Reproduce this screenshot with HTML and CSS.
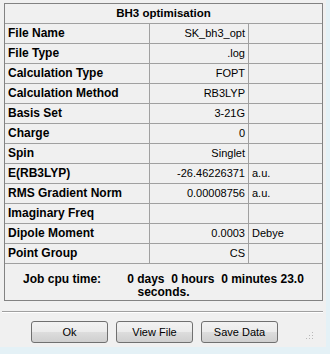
FILE: index.html
```html
<!DOCTYPE html>
<html lang="en">
<head>
  <meta charset="UTF-8" />
  <title>BH3 optimisation</title>
  <link rel="stylesheet" href="styles.css">
</head>
<body>
  <!-- 结果对话框 -->
  <div class="dialog">
    <div class="panel">
      <div class="title">BH3 optimisation</div>
      <div class="row"><div class="label">File Name</div><div class="value">SK_bh3_opt</div><div class="unit"></div></div>
      <div class="row"><div class="label">File Type</div><div class="value">.log</div><div class="unit"></div></div>
      <div class="row"><div class="label">Calculation Type</div><div class="value">FOPT</div><div class="unit"></div></div>
      <div class="row"><div class="label">Calculation Method</div><div class="value">RB3LYP</div><div class="unit"></div></div>
      <div class="row"><div class="label">Basis Set</div><div class="value">3-21G</div><div class="unit"></div></div>
      <div class="row"><div class="label">Charge</div><div class="value">0</div><div class="unit"></div></div>
      <div class="row"><div class="label">Spin</div><div class="value">Singlet</div><div class="unit"></div></div>
      <div class="row"><div class="label">E(RB3LYP)</div><div class="value">-26.46226371</div><div class="unit">a.u.</div></div>
      <div class="row"><div class="label">RMS Gradient Norm</div><div class="value">0.00008756</div><div class="unit">a.u.</div></div>
      <div class="row"><div class="label">Imaginary Freq</div><div class="value"></div><div class="unit"></div></div>
      <div class="row"><div class="label">Dipole Moment</div><div class="value">0.0003</div><div class="unit">Debye</div></div>
      <div class="row"><div class="label">Point Group</div><div class="value">CS</div><div class="unit"></div></div>
      <div class="job">
        <div class="job-line"><span class="job-label">Job cpu time:</span><span class="job-value">0 days  0 hours  0 minutes 23.0</span></div>
        <div class="job-line">seconds.</div>
      </div>
    </div>

    <div class="separator"></div>

    <!-- 按钮 -->
    <div class="buttons">
      <button class="btn">Ok</button>
      <button class="btn">View File</button>
      <button class="btn">Save Data</button>
    </div>

    <svg class="grip" width="9" height="9" viewBox="0 0 9 9">
      <rect x="7" y="1" width="1" height="1" fill="#b8b8b8"/>
      <rect x="4" y="4" width="1" height="1" fill="#b8b8b8"/>
      <rect x="7" y="4" width="1" height="1" fill="#b8b8b8"/>
      <rect x="1" y="7" width="1" height="1" fill="#b8b8b8"/>
      <rect x="4" y="7" width="1" height="1" fill="#b8b8b8"/>
      <rect x="7" y="7" width="1" height="1" fill="#b8b8b8"/>
    </svg>
  </div>
</body>
</html>
```

FILE: styles.css
```css
* {
  box-sizing: border-box;
}

body {
  margin: 0;
  background: #e4f1f6;
  font-family: "Liberation Sans", Arial, sans-serif;
  color: #000;
}

/* 对话框 */
.dialog {
  position: relative;
  width: 326px;
  height: 347px;
  padding: 3px 0 0 4px;
  background: #f0f0f0;
}

.panel {
  width: 319px;
  border: 1px solid #828282;
}

.title {
  height: 20px;
  border-bottom: 1px solid #a0a0a0;
  text-align: center;
  font-weight: bold;
  font-size: 11.5px;
  line-height: 19px;
}

/* 表格行 */
.row {
  display: grid;
  grid-template-columns: 145px 99px 73px;
  height: 20px;
  border-bottom: 1px solid #a0a0a0;
  line-height: 19px;
}

.label,
.value {
  border-right: 1px solid #a0a0a0;
}

.label {
  padding-left: 3px;
  font-weight: bold;
  font-size: 12px;
  white-space: nowrap;
}

.value {
  padding-right: 3px;
  text-align: right;
  font-size: 11px;
}

.unit {
  padding-left: 3px;
  font-size: 11px;
}

/* 计算时间 */
.job {
  height: 36px;
  padding-top: 9px;
  text-align: center;
  font-weight: bold;
  font-size: 12px;
  line-height: 13px;
}

.job-value {
  margin-left: 26px;
  white-space: pre;
}

.separator {
  width: 321px;
  margin: 10px 0 0 -2px;
  border-top: 1px solid #a0a0a0;
  border-bottom: 1px solid #ffffff;
}

/* 按钮 */
.buttons {
  display: flex;
  gap: 8px;
  margin: 8px 0 0 27px;
}

.btn {
  width: 77px;
  height: 22px;
  padding: 0;
  border: 1px solid #707070;
  border-radius: 3px;
  background: linear-gradient(#f2f2f2 0%, #ebebeb 50%, #dddddd 50%, #cfcfcf 100%);
  font-family: "Liberation Sans", Arial, sans-serif;
  font-size: 11px;
  color: #000;
}

.grip {
  position: absolute;
  right: 12px;
  bottom: 7px;
}
```
